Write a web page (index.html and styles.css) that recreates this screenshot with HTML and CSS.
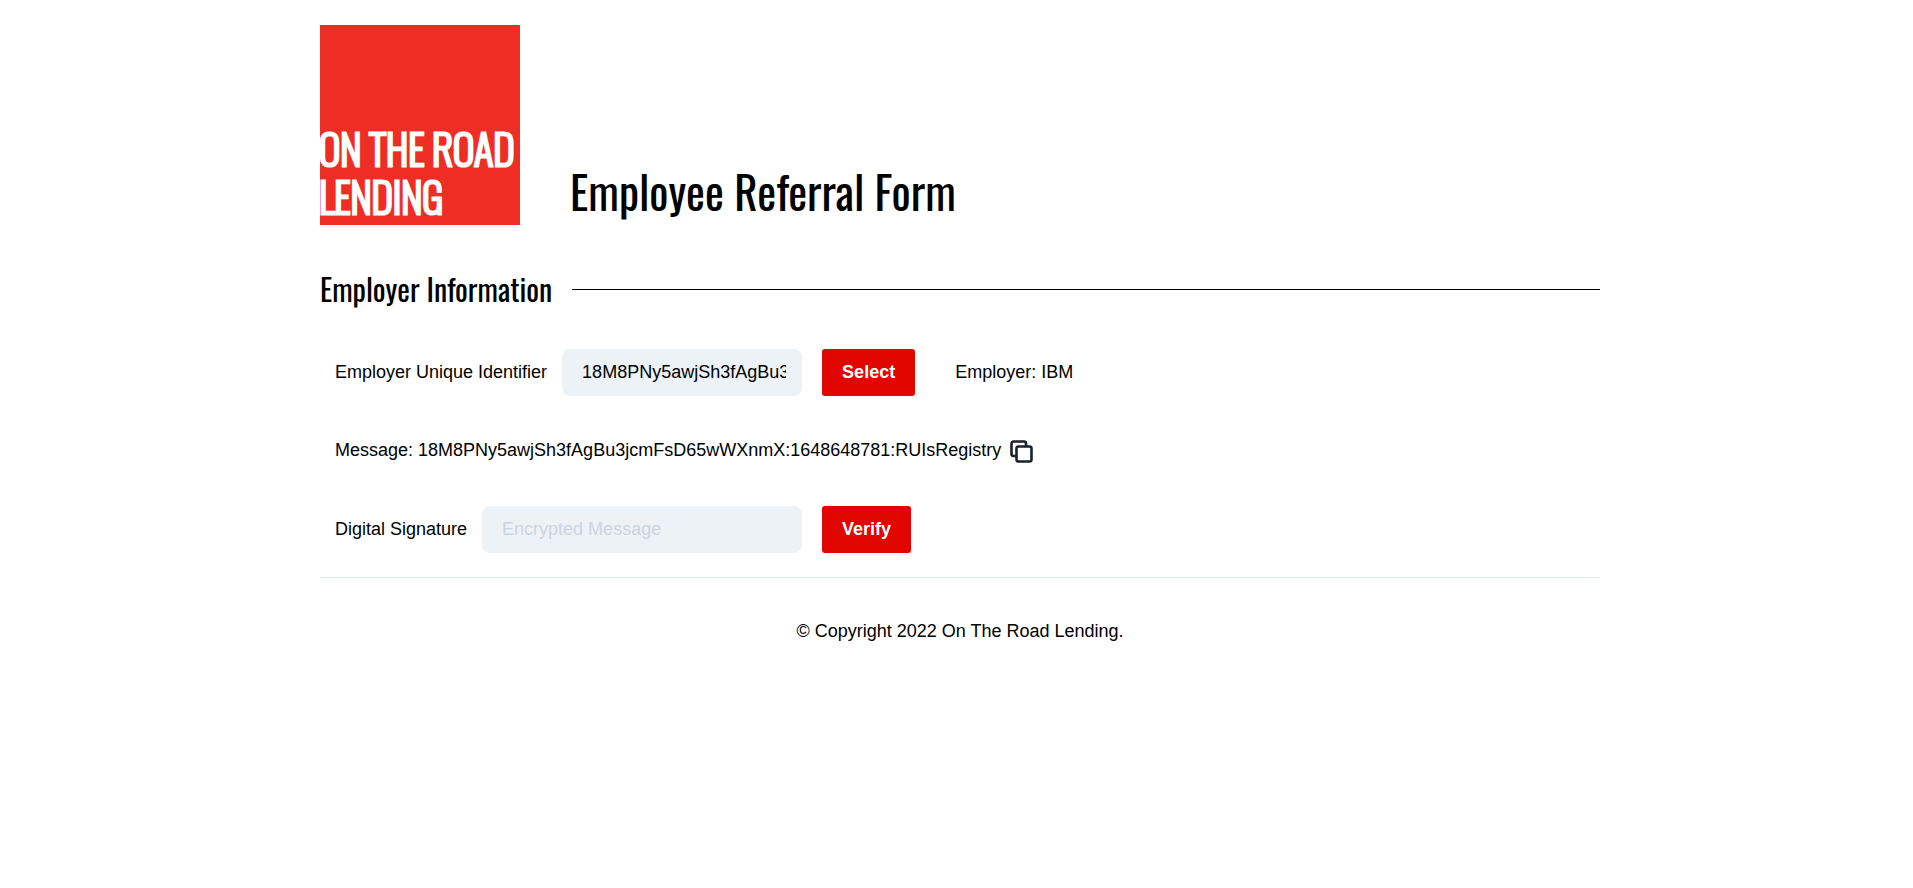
FILE: index.html
```html
<!DOCTYPE html>
<html lang="en">
<head>
<meta charset="utf-8">
<title>Employee Referral Form</title>
<link rel="stylesheet" href="styles.css">
</head>
<body>
<div class="page">
  <header class="header">
    <svg class="logo" viewBox="0 0 200 200" role="img" aria-label="On The Road Lending">
      <rect width="200" height="200" fill="#ee2e25"/>
      <text class="logo-text" x="-1" y="141">ON THE ROAD</text>
      <text class="logo-text" x="-1" y="189">LENDING</text>
    </svg>
    <h1 class="title">Employee Referral Form</h1>
  </header>
  <main>
    <h2 class="section-title">Employer Information</h2>
    <form class="form">
      <div class="row">
        <div class="control">
          <label for="identifier">Employer Unique Identifier</label>
          <input class="field" id="identifier" type="text" value="18M8PNy5awjSh3fAgBu3jcmFsD65wWXnmX">
        </div>
        <button class="button" type="button">Select</button>
        <p class="employer">Employer: IBM</p>
      </div>
      <div class="row message">
        <p>Message: 18M8PNy5awjSh3fAgBu3jcmFsD65wWXnmX:1648648781:RUIsRegistry</p>
        <button class="copy" type="button" aria-label="Copy message">
          <svg viewBox="0 0 24 24" fill="none" stroke="#1a202c" stroke-width="2.600" stroke-linecap="round" stroke-linejoin="round">
            <path d="M6.500 17H4.500a2 2 0 0 1-2-2V4.500a2 2 0 0 1 2-2H15a2 2 0 0 1 2 2v2.500"/>
            <rect x="7.500" y="7.500" width="15" height="15" rx="2"/>
          </svg>
        </button>
      </div>
      <div class="row">
        <div class="control">
          <label for="signature">Digital Signature</label>
          <input class="field field-wide" id="signature" type="text" placeholder="Encrypted Message">
        </div>
        <button class="button" type="button">Verify</button>
      </div>
    </form>
  </main>
  <footer class="footer">© Copyright 2022 On The Road Lending.</footer>
</div>
</body>
</html>
```
FILE: styles.css
```css
* { box-sizing: border-box; }
body {
  margin: 0;
  padding-left: 7px;
  background: #fff;
  color: #000;
  font: 18px/27px "Liberation Sans", Arial, sans-serif;
}
h1, h2, p { margin: 0; }
.page { max-width: 1280px; margin: 0 auto; padding-top: 25px; }
.header { display: flex; align-items: flex-end; gap: 50px; }
.logo { width: 200px; height: 200px; flex: none; }
.logo-text {
  fill: #fff;
  stroke: #fff;
  stroke-width: 3px;
  font: 200 41px "Oswald", "Liberation Sans Narrow", "Liberation Sans", sans-serif;
}
.title, .section-title { font-family: "Oswald", "Liberation Sans Narrow", "Liberation Sans", sans-serif; font-weight: 400; }
.title { padding-bottom: 2px; font-size: 45px; line-height: 64px; }
.section-title {
  display: flex;
  align-items: center;
  gap: 20px;
  margin-top: 40px;
  font-size: 30px;
  line-height: 48px;
}
.section-title::after { content: ""; flex: 1; border-top: 1px solid #000; }
.form { padding: 36px 0 24px; border-bottom: 1px solid #e2e8f0; }
.row { display: flex; align-items: center; gap: 20px; padding-left: 15px; }
.control { display: flex; align-items: center; gap: 15px; }
.field {
  width: 240px;
  height: 47px;
  padding: 0 16px 0 20px;
  border: 0;
  border-radius: 8px;
  background: #edf2f7;
  color: #000;
  font: inherit;
}
.field-wide { width: 320px; }
.field::placeholder { color: #cbd5e0; opacity: 1; }
.button {
  height: 47px;
  padding: 0 20px;
  border: 0;
  border-radius: 3px;
  background: #e10600;
  color: #fff;
  font: inherit;
  font-weight: 700;
}
.employer { margin-left: 20px; }
.message { gap: 8px; padding-top: 41px; padding-bottom: 42px; }
.copy { display: flex; padding: 0; border: 0; background: none; }
.copy svg { width: 24px; height: 24px; }
.footer { padding: 40px 0; text-align: center; }
```
